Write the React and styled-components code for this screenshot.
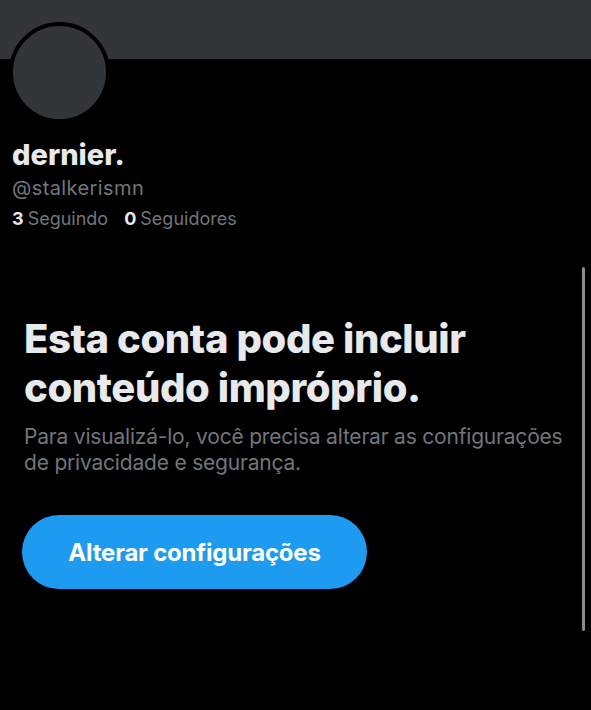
import React from 'react';
import styled, { createGlobalStyle } from 'styled-components';

const Global = createGlobalStyle`
  html, body {
    margin: 0;
    padding: 0;
    background: #000;
  }
  body {
    font-family: Inter, "Noto Sans", sans-serif;
    color: #e7e9ea;
  }
`;

const Screen = styled.div`
  position: relative;
  width: 591px;
  height: 710px;
  background: #000;
  overflow: hidden;
`;

const Banner = styled.div`
  height: 59px;
  background: #333639;
`;

const Profile = styled.div`
  padding: 0 12px;
`;

const Avatar = styled.div`
  width: 93px;
  height: 93px;
  margin-top: -37px;
  margin-left: -3px;
  border-radius: 50%;
  background: #333639;
  border: 4px solid #000;
`;

const Name = styled.div`
  margin-top: 15px;
  font-size: 29px;
  font-weight: 800;
  line-height: 34px;
`;

const Handle = styled.div`
  margin-top: 4px;
  font-size: 20px;
  letter-spacing: 0.4px;
  line-height: 24px;
  color: #71767b;
`;

const Counts = styled.div`
  display: flex;
  gap: 16px;
  margin-top: 8px;
  font-size: 18px;
  line-height: 22px;
  color: #71767b;
`;

const Count = styled.span`
  b {
    color: #e7e9ea;
    font-weight: 700;
    margin-right: 4px;
  }
`;

const Notice = styled.div`
  padding: 84px 24px 0;
`;

const Title = styled.h1`
  margin: 0;
  font-size: 40px;
  font-weight: 800;
  line-height: 49px;
  letter-spacing: -0.4px;
  color: #e7e9ea;
`;

const Body = styled.p`
  max-width: 545px;
  margin: 12px 0 0;
  font-size: 21px;
  line-height: 26px;
  letter-spacing: -0.2px;
  color: #71767b;
`;

const Button = styled.button`
  display: flex;
  align-items: center;
  justify-content: center;
  margin-top: 39px;
  margin-left: -2px;
  width: 345px;
  height: 74px;
  border: none;
  border-radius: 37px;
  background: #1d9bf0;
  color: #fff;
  font-family: Inter, "Noto Sans", sans-serif;
  font-size: 24px;
  font-weight: 700;
  letter-spacing: -0.2px;
`;

const Scrollbar = styled.div`
  position: absolute;
  right: 6px;
  top: 267px;
  width: 3px;
  height: 364px;
  border-radius: 2px;
  background: #8b8b8b;
`;

export default function App() {
  return (
    <Screen>
      <Global />
      <Banner />
      <Profile>
        <Avatar />
        <Name>dernier.</Name>
        <Handle>@stalkerismn</Handle>
        <Counts>
          <Count><b>3</b>Seguindo</Count>
          <Count><b>0</b>Seguidores</Count>
        </Counts>
      </Profile>
      <Notice>
        <Title>Esta conta pode incluir conteúdo impróprio.</Title>
        <Body>Para visualizá-lo, você precisa alterar as configurações de privacidade e segurança.</Body>
        <Button>Alterar configurações</Button>
      </Notice>
      <Scrollbar />
    </Screen>
  );
}
